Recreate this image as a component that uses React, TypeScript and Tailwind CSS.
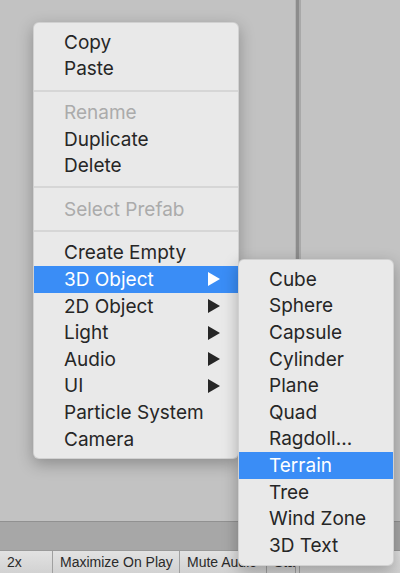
import React from "react"

type Entry = { label?: string; sep?: boolean; disabled?: boolean; sub?: boolean; active?: boolean }

const mainItems: Entry[] = [
  { label: "Copy" },
  { label: "Paste" },
  { sep: true },
  { label: "Rename", disabled: true },
  { label: "Duplicate" },
  { label: "Delete" },
  { sep: true },
  { label: "Select Prefab", disabled: true },
  { sep: true },
  { label: "Create Empty" },
  { label: "3D Object", sub: true, active: true },
  { label: "2D Object", sub: true },
  { label: "Light", sub: true },
  { label: "Audio", sub: true },
  { label: "UI", sub: true },
  { label: "Particle System" },
  { label: "Camera" },
]

const subItems: Entry[] = [
  { label: "Cube" },
  { label: "Sphere" },
  { label: "Capsule" },
  { label: "Cylinder" },
  { label: "Plane" },
  { label: "Quad" },
  { label: "Ragdoll..." },
  { label: "Terrain", active: true },
  { label: "Tree" },
  { label: "Wind Zone" },
  { label: "3D Text" },
]

const toolbar = [
  { label: "2x", w: "w-[53px]" },
  { label: "Maximize On Play", w: "w-[127px]" },
  { label: "Mute Audio", w: "w-[87px]" },
  { label: "Stats", w: "w-[29px]" },
]

function Arrow({ white }: { white?: boolean }) {
  return (
    <svg width="12" height="14" viewBox="0 0 12 14" className="shrink-0">
      <path d="M0 0 L12 7 L0 14 Z" fill={white ? "#ffffff" : "#262626"} />
    </svg>
  )
}

function Menu({ items, className }: { items: Entry[]; className: string }) {
  return (
    <div
      className={`absolute rounded-[6px] bg-[#e9e9e9] border border-black/10 shadow-[0_5px_16px_rgba(0,0,0,0.28)] py-[6px] ${className}`}
    >
      {items.map((it, i) =>
        it.sep ? (
          <div key={i} className="h-[17px] flex items-center">
            <div className="h-[2px] w-full bg-[#d6d6d6]" />
          </div>
        ) : (
          <div
            key={i}
            className={`h-[26.6px] flex items-center justify-between pl-[30px] pr-[18px] text-[19px] leading-none ${
              it.active ? "bg-[#3a8df6] text-white" : it.disabled ? "text-[#ababab]" : "text-[#262626]"
            }`}
          >
            <span>{it.label}</span>
            {it.sub && <Arrow white={it.active} />}
          </div>
        )
      )}
    </div>
  )
}

export default function App() {
  return (
    <div className="relative w-[400px] h-[573px] overflow-hidden bg-[#c2c2c2] font-['Inter','Liberation_Sans',sans-serif]">
      <div className="flex flex-col h-full">
        <div className="flex h-[521px]">
          <div className="w-[295px] bg-[#c2c2c2]" />
          <div className="w-[6px] flex">
            <div className="w-[1px] bg-[#b2b2b2]" />
            <div className="w-[3px] bg-[#8c8c8c]" />
            <div className="w-[2px] bg-[#a9a9a9]" />
          </div>
          <div className="flex-1 bg-[#c3c3c3]" />
        </div>
        <div className="h-[29px] bg-[#a7a7a7] border-t border-[#919191]" />
        <div className="flex-1 flex bg-gradient-to-b from-[#e2e2e2] to-[#d2d2d2] border-t border-[#9a9a9a] text-[14px] text-[#2a2a2a] font-['Liberation_Sans',sans-serif]">
          {toolbar.map((b) => (
            <div key={b.label} className={`${b.w} shrink-0 border-r border-[#a0a0a0] flex items-center px-[7px] whitespace-nowrap overflow-hidden`}>
              {b.label}
            </div>
          ))}
          <div className="w-[4px] border-r border-[#a0a0a0]" />
        </div>
      </div>

      <Menu items={mainItems} className="left-[33px] top-[22px] w-[206px]" />
      <Menu items={subItems} className="left-[238px] top-[259px] w-[156px]" />
    </div>
  )
}
